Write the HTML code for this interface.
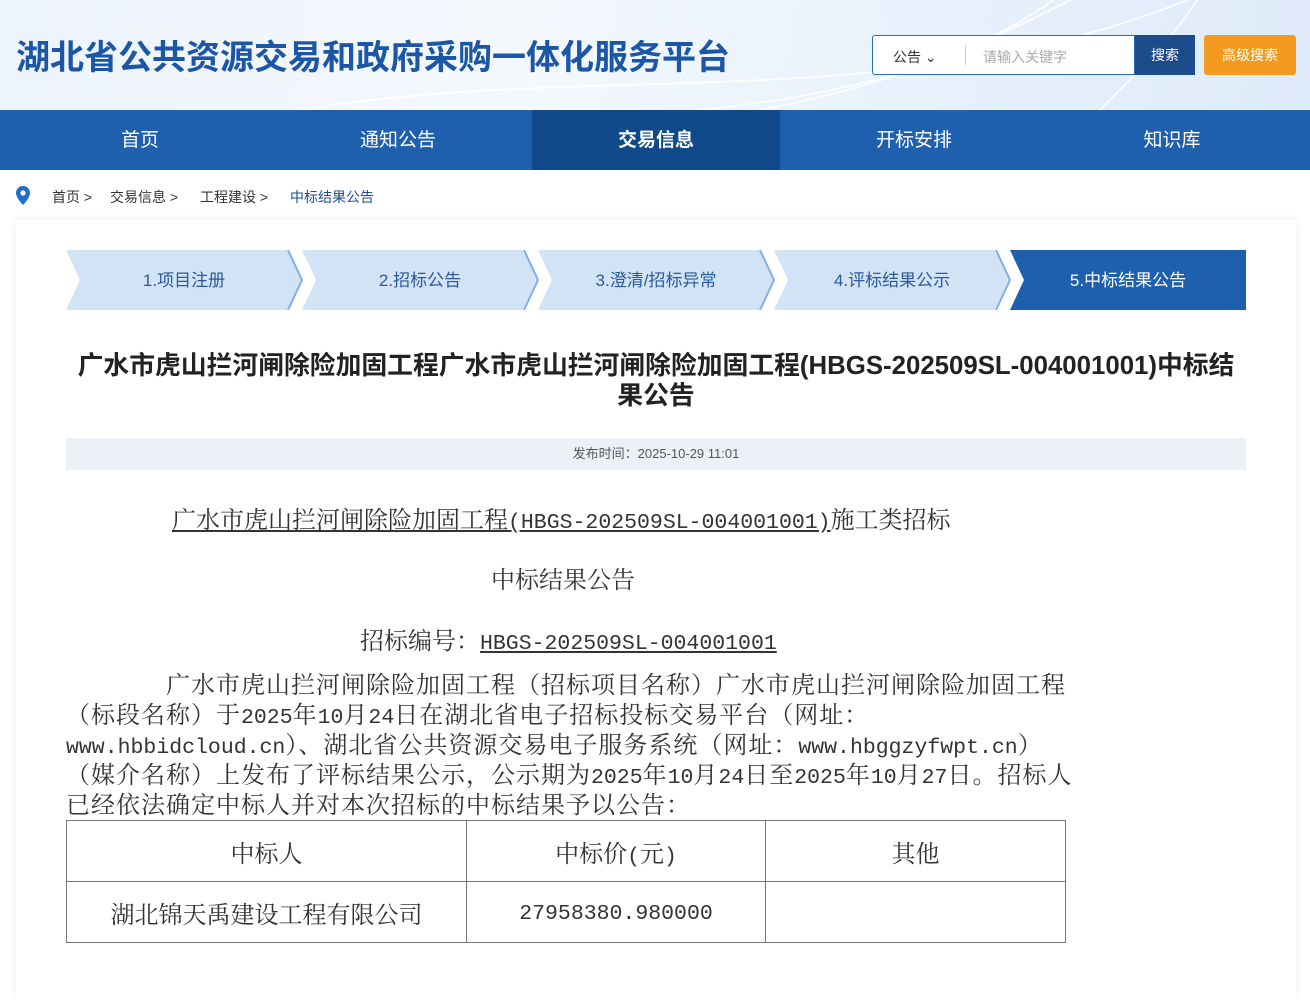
<!DOCTYPE html>
<html><head><meta charset="utf-8"><style>
*{margin:0;padding:0;box-sizing:border-box}
body{width:1310px;height:985px;overflow:hidden;background:#fff;font-family:"Liberation Sans","Noto Sans CJK SC",sans-serif;position:relative}
.hdr{position:absolute;left:0;top:0;width:1310px;height:110px;background:linear-gradient(100deg,#eef4fc 0%,#f4f8fd 40%,#e8f1fc 70%,#dfeafa 100%);overflow:hidden}
.logo{position:absolute;left:16px;top:30px;font-size:34px;font-weight:bold;color:#1b57a6;white-space:nowrap}
.sbox{position:absolute;left:872px;top:35px;width:263px;height:40px;border:1px solid #2a6bc0;background:#fff;border-radius:3px 0 0 3px}
.sbox .t{position:absolute;left:20px;top:11px;font-size:14px;color:#333}
.sbox .v{position:absolute;left:92px;top:9px;height:20px;border-left:1px solid #ccc}
.sbox .p{position:absolute;left:110px;top:11px;font-size:14px;color:#aaa}
.sbtn{position:absolute;left:1135px;top:35px;width:60px;height:40px;background:#1d4c8c;color:#fff;font-size:14px;text-align:center;line-height:40px}
.abtn{position:absolute;left:1204px;top:35px;width:92px;height:40px;background:#f39a1f;color:#fff;font-size:14px;text-align:center;line-height:40px;border-radius:3px}
.nav{position:absolute;left:0;top:110px;width:1310px;height:60px;background:#1f60ae}
.nav div{position:absolute;top:0;height:60px;line-height:62px;text-align:center;color:#fff;font-size:19px;width:248px}
.nav .a{background:#114a8a;font-weight:bold}
.bc{position:absolute;top:187px;font-size:14px;color:#333;white-space:nowrap}
.card{position:absolute;left:16px;top:220px;width:1280px;height:780px;background:#fff;box-shadow:0 0 8px rgba(0,0,0,.08)}
.steps{position:absolute;left:66px;top:250px;width:1180px;height:60px}
.st{position:absolute;top:0;height:60px;line-height:62px;text-align:center;font-size:17px;color:#2a5a9a;width:236px}
.title{position:absolute;left:40px;top:351px;width:1232px;text-align:center;font-size:25.8px;font-weight:bold;color:#222;line-height:30px;white-space:nowrap}
.pub{position:absolute;left:66px;top:438px;width:1180px;height:32px;background:#ecf1f8;text-align:center;line-height:32px;font-size:13px;color:#555}
.s{font-family:"Liberation Serif","Noto Serif CJK SC",serif;color:#333;position:absolute;white-space:nowrap;font-size:24px}
.m{font-family:"Liberation Mono",monospace;font-size:21.5px;letter-spacing:0}
table{position:absolute;left:66px;top:820px;width:1000px;border-collapse:collapse;font-family:"Liberation Serif","Noto Serif CJK SC",serif;font-size:24px;color:#333}
td{border:1px solid #777;height:61px;text-align:center}
</style></head><body>
<div class="hdr">
<svg width="1310" height="110" style="position:absolute;left:0;top:0"><g fill="none" stroke="#fff" stroke-width="2" opacity=".8"><path d="M700 110 C900 90 1000 40 1060 -5"/><path d="M760 110 C920 80 1010 30 1080 -5"/><path d="M300 110 C600 60 900 120 1200 -5"/><path d="M1100 110 C1150 60 1180 30 1200 -5"/></g></svg>
<div class="logo">湖北省公共资源交易和政府采购一体化服务平台</div>
<div class="sbox"><span class="t">公告 ⌄</span><span class="v"></span><span class="p">请输入关键字</span></div>
<div class="sbtn">搜索</div><div class="abtn">高级搜索</div>
</div>
<div class="nav"><div style="left:16px">首页</div><div style="left:274px">通知公告</div><div class="a" style="left:532px">交易信息</div><div style="left:790px">开标安排</div><div style="left:1048px">知识库</div></div>
<svg style="position:absolute;left:16px;top:186px" width="14" height="19" viewBox="0 0 14 19"><path d="M7 0C3 0 0 3 0 7c0 5 7 12 7 12s7-7 7-12c0-4-3-7-7-7z" fill="#1f6fd0"/><circle cx="7" cy="7" r="2.6" fill="#fff"/></svg>
<div class="bc" style="left:52px">首页 &gt;</div>
<div class="bc" style="left:110px">交易信息 &gt;</div>
<div class="bc" style="left:200px">工程建设 &gt;</div>
<div class="bc" style="left:290px;color:#1f4f8f">中标结果公告</div>
<div class="card"></div>
<div class="steps">
<svg width="1180" height="60" style="position:absolute;left:0;top:0">
<g fill="#d3e3f6"><polygon points="0,0 222,0 236,30 222,60 0,60 14,30"/><polygon points="236,0 458,0 472,30 458,60 236,60 250,30"/><polygon points="472,0 694,0 708,30 694,60 472,60 486,30"/><polygon points="708,0 930,0 944,30 930,60 708,60 722,30"/></g>
<g fill="none" stroke="#7fb0ea" stroke-width="2"><polyline points="222,0 236,30 222,60"/><polyline points="458,0 472,30 458,60"/><polyline points="694,0 708,30 694,60"/><polyline points="930,0 944,30 930,60"/></g>
<polygon points="944,0 1180,0 1180,60 944,60 958,30" fill="#1f60ae"/></svg>
<div class="st" style="left:0">1.项目注册</div><div class="st" style="left:236px">2.招标公告</div><div class="st" style="left:472px">3.澄清/招标异常</div><div class="st" style="left:708px">4.评标结果公示</div><div class="st" style="left:944px;color:#fff">5.中标结果公告</div>
</div>
<div class="title">广水市虎山拦河闸除险加固工程广水市虎山拦河闸除险加固工程(HBGS-202509SL-004001001)中标结<br>果公告</div>
<div class="pub">发布时间：2025-10-29 11:01</div>
<div class="s" style="left:172px;top:500px"><u>广水市虎山拦河闸除险加固工程<span class="m">(HBGS-202509SL-004001001)</span></u>施工类招标</div>
<div class="s" style="left:491px;top:560px">中标结果公告</div>
<div class="s" style="left:360px;top:621px">招标编号：<u><span class="m">HBGS-202509SL-004001001</span></u></div>
<div class="s" style="left:166px;top:665px;letter-spacing:1px">广水市虎山拦河闸除险加固工程（招标项目名称）广水市虎山拦河闸除险加固工程</div>
<div class="s" style="left:66px;top:695px;letter-spacing:1px">（标段名称）于<span class="m">2025</span>年<span class="m">10</span>月<span class="m">24</span>日在湖北省电子招标投标交易平台（网址：</div>
<div class="s" style="left:66px;top:725px;letter-spacing:1px"><span class="m">www.hbbidcloud.cn</span>）、湖北省公共资源交易电子服务系统（网址：<span class="m">www.hbggzyfwpt.cn</span>）</div>
<div class="s" style="left:66px;top:755px;letter-spacing:1px">（媒介名称）上发布了评标结果公示，公示期为<span class="m">2025</span>年<span class="m">10</span>月<span class="m">24</span>日至<span class="m">2025</span>年<span class="m">10</span>月<span class="m">27</span>日。招标人</div>
<div class="s" style="left:66px;top:785px;letter-spacing:1px">已经依法确定中标人并对本次招标的中标结果予以公告：</div>
<table><tr><td style="width:400px">中标人</td><td style="width:299px">中标价<span class="m">(</span>元<span class="m">)</span></td><td>其他</td></tr>
<tr><td>湖北锦天禹建设工程有限公司</td><td><span class="m">27958380.980000</span></td><td></td></tr></table>
</body></html>
